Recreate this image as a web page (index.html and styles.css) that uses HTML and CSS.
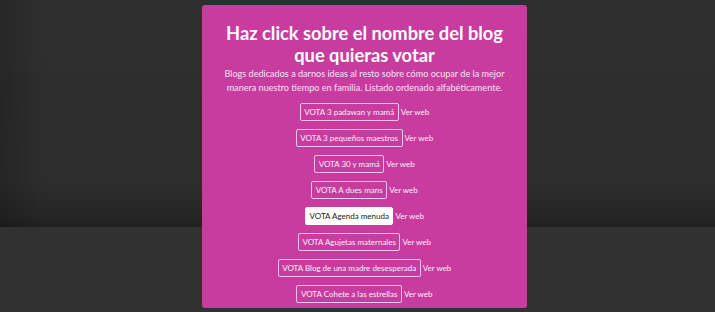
FILE: index.html
```html
<!DOCTYPE html>
<html lang="es">
<head>
<meta charset="utf-8">
<title>Vota blogs</title>
<link rel="stylesheet" href="styles.css">
</head>
<body>
<main class="card">
  <h1 class="title">Haz click sobre el nombre del blog que quieras votar</h1>
  <p class="intro">Blogs dedicados a darnos ideas al resto sobre cómo ocupar de la mejor manera nuestro tiempo en familia. Listado ordenado alfabéticamente.</p>
  <ul class="list">
    <li class="row"><button class="vote">VOTA 3 padawan y mamá</button><a class="web" href="#">Ver web</a></li>
    <li class="row"><button class="vote">VOTA 3 pequeños maestros</button><a class="web" href="#">Ver web</a></li>
    <li class="row"><button class="vote">VOTA 30 y mamá</button><a class="web" href="#">Ver web</a></li>
    <li class="row"><button class="vote">VOTA A dues mans</button><a class="web" href="#">Ver web</a></li>
    <li class="row"><button class="vote vote-active">VOTA Agenda menuda</button><a class="web" href="#">Ver web</a></li>
    <li class="row"><button class="vote">VOTA Agujetas maternales</button><a class="web" href="#">Ver web</a></li>
    <li class="row"><button class="vote">VOTA Blog de una madre desesperada</button><a class="web" href="#">Ver web</a></li>
    <li class="row"><button class="vote">VOTA Cohete a las estrellas</button><a class="web" href="#">Ver web</a></li>
  </ul>
</main>
</body>
</html>
```
FILE: styles.css
```css
html, body {
  margin: 0;
  padding: 0;
}
body {
  height: 312px;
  overflow: hidden;
  font-family: Lato, "Open Sans", sans-serif;
  background:
    linear-gradient(to right, rgba(0,0,0,0.18), rgba(0,0,0,0) 45px) 0 0 / 100% 227px no-repeat,
    linear-gradient(to bottom, #2f2f2f 0, #2d2d2d 180px, #262626 215px, #212121 227px, #313131 227px, #313131 100%);
  padding-top: 5px;
  box-sizing: border-box;
}
.card {
  display: block;
  width: 325px;
  height: 303px;
  margin-left: 202px;
  box-sizing: border-box;
  background: #c83c9f;
  border-radius: 3px;
  padding-top: 17px;
  text-align: center;
  color: #fff;
}
.title {
  margin: 0;
  font-size: 18.3px;
  line-height: 22px;
  font-weight: 700;
  padding: 0 10px;
}
.intro {
  margin: 1px 0 0;
  font-size: 9.1px;
  line-height: 14px;
  color: #f6e4f0;
  padding: 0 17px;
}
.list {
  list-style: none;
  margin: 8px 0 0;
  padding: 0;
}
.row {
  display: flex;
  justify-content: center;
  align-items: center;
  height: 18px;
  margin-bottom: 8px;
}
.vote {
  font-family: inherit;
  font-size: 8px;
  line-height: 15px;
  height: 18px;
  padding: 0 3.5px;
  background: transparent;
  color: #fbeef7;
  border: 1px solid rgba(255,255,255,0.7);
  border-radius: 2px;
  cursor: pointer;
}
.vote-active {
  background: #fff;
  color: #222;
  border-color: #fff;
}
.web {
  margin-left: 2px;
  font-size: 8px;
  color: #fbeef7;
  text-decoration: none;
}
```
